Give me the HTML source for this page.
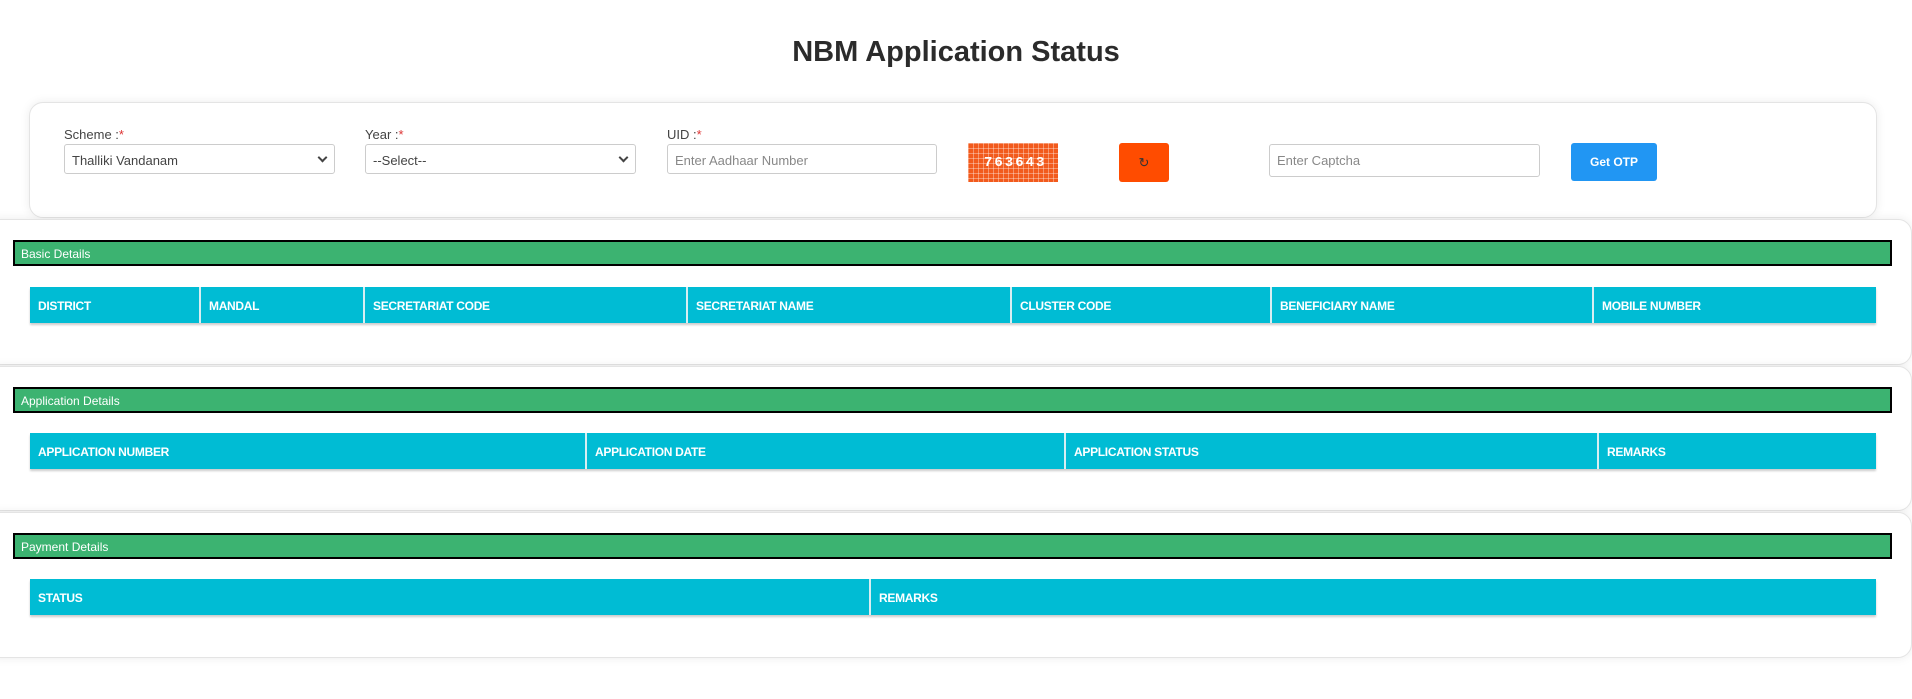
<!DOCTYPE html>
<html><head><meta charset="utf-8"><style>
*{box-sizing:border-box;margin:0;padding:0}
body{width:1912px;height:699px;background:#fff;font-family:"Liberation Sans",sans-serif;position:relative;overflow:hidden;color:#333}
.abs{position:absolute}
h1{position:absolute;left:0;width:1912px;top:36px;text-align:center;font-size:29px;font-weight:bold;color:#2b2b2b}
.card{position:absolute;background:#fff;border:1px solid #e4e4e4;border-radius:14px;box-shadow:0 0 10px rgba(0,0,0,.08)}
.lbl{position:absolute;font-size:13px;color:#444}
.lbl span{color:#d33}
.inp{position:absolute;height:30px;border:1px solid #ccc;border-radius:3px;font-size:13px;color:#444;padding:8px 7px;background:#fff}
.ph{color:#888}
.chev{position:absolute;right:8px;top:9px;width:7px;height:7px;border-right:2px solid #444;border-bottom:2px solid #444;transform:rotate(45deg)}
.bar{position:absolute;left:13px;width:1879px;height:26px;background:#3cb371;border:2px solid #000;color:#fff;font-size:12px;padding:5px 6px}
.th{position:absolute;left:30px;width:1846px;height:36px;background:#00bcd4;box-shadow:0 2px 2px #ccc;display:flex}
.th div{color:#fff;font-weight:bold;font-size:12px;padding:12px 8px;border-right:2px solid #d7eef2;letter-spacing:-0.3px}
.th div:last-child{border-right:none;flex:1}
</style></head><body>
<h1>NBM Application Status</h1>
<div class="card" style="left:29px;top:102px;width:1848px;height:116px"></div>
<div class="lbl" style="left:64px;top:127px">Scheme :<span>*</span></div>
<div class="inp" style="left:64px;top:144px;width:271px">Thalliki Vandanam<div class="chev"></div></div>
<div class="lbl" style="left:365px;top:127px">Year :<span>*</span></div>
<div class="inp" style="left:365px;top:144px;width:271px">--Select--<div class="chev"></div></div>
<div class="lbl" style="left:667px;top:127px">UID :<span>*</span></div>
<div class="inp ph" style="left:667px;top:144px;width:270px">Enter Aadhaar Number</div>
<div class="abs" style="left:968px;top:143px;width:90px;height:39px;background:#f25a1c;background-image:linear-gradient(90deg,rgba(255,255,255,.35) 1px,transparent 1px),linear-gradient(rgba(255,255,255,.35) 1px,transparent 1px);background-size:5px 5px;color:#fff;font-family:'Liberation Mono',monospace;font-weight:bold;font-size:14px;letter-spacing:2px;padding:12px 0 0 16px">763643</div>
<div class="abs" style="left:1119px;top:143px;width:50px;height:39px;background:#ff4c00;border-radius:3px;color:#333;font-size:13px;text-align:center;line-height:39px">↻</div>
<div class="inp ph" style="left:1269px;top:144px;width:271px;height:33px">Enter Captcha</div>
<div class="abs" style="left:1571px;top:143px;width:86px;height:38px;background:#2196f3;border-radius:3px;color:#fff;font-weight:bold;font-size:12px;text-align:center;line-height:38px">Get OTP</div>

<div class="card" style="left:-14px;top:219px;width:1926px;height:146px"></div>
<div class="bar" style="top:240px">Basic Details</div>
<div class="th" style="top:287px">
<div style="width:171px">DISTRICT</div><div style="width:164px">MANDAL</div><div style="width:323px">SECRETARIAT CODE</div><div style="width:324px">SECRETARIAT NAME</div><div style="width:260px">CLUSTER CODE</div><div style="width:322px">BENEFICIARY NAME</div><div>MOBILE NUMBER</div></div>

<div class="card" style="left:-14px;top:366px;width:1926px;height:145px"></div>
<div class="bar" style="top:387px">Application Details</div>
<div class="th" style="top:433px">
<div style="width:557px">APPLICATION NUMBER</div><div style="width:479px">APPLICATION DATE</div><div style="width:533px">APPLICATION STATUS</div><div>REMARKS</div></div>

<div class="card" style="left:-14px;top:512px;width:1926px;height:146px"></div>
<div class="bar" style="top:533px">Payment Details</div>
<div class="th" style="top:579px">
<div style="width:841px">STATUS</div><div>REMARKS</div></div>
</body></html>
